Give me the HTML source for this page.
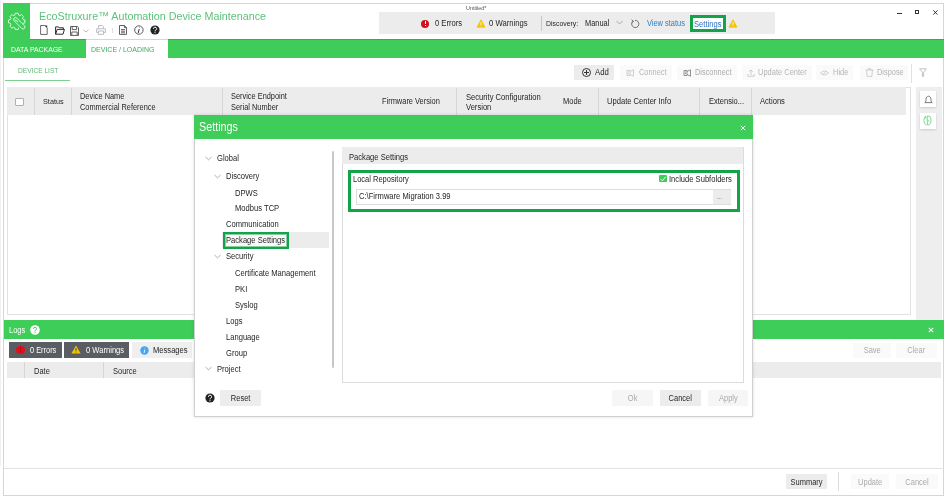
<!DOCTYPE html>
<html><head><meta charset="utf-8">
<style>
*{margin:0;padding:0;box-sizing:border-box}
html,body{width:946px;height:504px;overflow:hidden;background:#fff}
body{position:relative;font-family:"Liberation Sans",sans-serif;color:#262626;font-size:7.5px}
.a{position:absolute}
.t{position:absolute;white-space:nowrap;line-height:10px;height:10px;will-change:transform;transform:scaleY(1.1);transform-origin:0 60%}
.g{background:#3dcd58}
.bd{border:1px solid #d9d9d9}
</style></head><body>
<!-- window frame -->
<div class="a" style="left:0;top:0;width:1px;height:466px;background:#f0f0f0"></div>
<div class="a" style="left:3px;top:3px;width:941px;height:493px;border:1px solid #d6d6d6;background:#fff"></div>

<!-- title bar -->
<div class="a g" style="left:3px;top:3px;width:27px;height:36px"></div>
<svg class="a" style="left:6px;top:10px" width="22" height="22" viewBox="0 0 22 22">
<path d="M12.74 17.68 L12.63 17.71 L12.14 19.57 L9.26 19.57 L8.77 17.71 L7.60 17.23 L5.94 18.20 L3.90 16.16 L4.87 14.50 L4.39 13.33 L2.53 12.84 L2.53 9.96 L4.39 9.47 L4.87 8.30 L3.90 6.64 L5.94 4.60 L7.60 5.57 L8.77 5.09 L9.26 3.23 L12.14 3.23 L12.63 5.09 L13.80 5.57 L15.46 4.60 L17.50 6.64 L16.53 8.30 L17.01 9.47 L18.87 9.96 L18.87 12.84 L17.01 13.33 L16.90 13.66" stroke="#e8ffe8" stroke-width="0.9" fill="none" stroke-linejoin="round"/>
<path d="M7.96 10.64 L15.86 18.54 A1.9 1.9 0 0 0 18.54 15.86 L10.64 7.96 A1.9 1.9 0 0 0 7.96 10.64 Z M8.6 9.6 L12.2 11.9" stroke="#e8ffe8" stroke-width="0.9" fill="none" stroke-linejoin="round"/>
</svg>
<!-- toolbar icons -->
<svg class="a" style="left:40px;top:25px" width="8" height="10" viewBox="0 0 8 10"><path d="M0.6 0.5 L4.8 0.5 L7.2 2.8 L7.2 9.4 L0.6 9.4 Z" stroke="#444" stroke-width="0.8" fill="none" stroke-linejoin="round"/><path d="M4.6 0.5 L7.2 0.5 L7.2 2.8 Z" fill="#333"/></svg>
<svg class="a" style="left:54.5px;top:25.5px" width="10" height="9" viewBox="0 0 10 9"><path d="M0.6 0.9 L3.6 0.9 L4.4 1.8 L8.4 1.8 L8.4 3.4 M0.6 0.9 L0.6 8.2 L8 8.2 L9.4 3.4 L2.2 3.4 L0.6 8.2" stroke="#222" stroke-width="0.95" fill="none" stroke-linejoin="round"/></svg>
<svg class="a" style="left:70px;top:26px" width="9" height="10" viewBox="0 0 9 10"><path d="M0.5 0.5 L7.4 0.5 L8.5 1.6 L8.5 9.4 L0.5 9.4 Z M2.2 0.5 L2.2 3.6 L6.6 3.6 L6.6 0.5 M1.8 9.4 L1.8 6 L7.2 6 L7.2 9.4" stroke="#444" stroke-width="0.85" fill="none" stroke-linejoin="round"/></svg>
<svg class="a" style="left:83px;top:28.5px" width="6" height="4" viewBox="0 0 6 4"><path d="M0.5 0.8 L3 3 L5.5 0.8" stroke="#999" stroke-width="0.7" fill="none"/></svg>
<svg class="a" style="left:96px;top:25px" width="10" height="10" viewBox="0 0 10 10"><path d="M2.6 3.6 L2.6 0.6 L6.4 0.6 L7.4 1.6 L7.4 3.6 M0.6 3.8 L9.4 3.8 L9.4 7.4 L7.6 7.4 M2.4 7.4 L0.6 7.4 L0.6 3.8 M2.4 6 L7.6 6 L7.6 9.4 L2.4 9.4 Z" stroke="#aaa" stroke-width="0.75" fill="none" stroke-linejoin="round"/></svg>
<div class="a" style="left:111.5px;top:28px;width:1px;height:5px;background:#ddd"></div>
<svg class="a" style="left:119px;top:25px" width="8" height="10" viewBox="0 0 8 10"><path d="M0.5 0.5 L5.4 0.5 L7.5 2.6 L7.5 9.4 L0.5 9.4 Z M5.4 0.5 L5.4 2.6 L7.5 2.6 M2 4.6 L6 4.6 M2 6.2 L6 6.2 M2 7.8 L6 7.8" stroke="#444" stroke-width="0.85" fill="none" stroke-linejoin="round"/></svg>
<svg class="a" style="left:134px;top:24.5px" width="10" height="10" viewBox="0 0 10 10"><circle cx="4.9" cy="5" r="4.2" stroke="#333" stroke-width="0.8" fill="none"/><path d="M5.6 2.2 L5.6 2.6 M5.2 4 L4.2 8" stroke="#333" stroke-width="1"/></svg>
<svg class="a" style="left:150px;top:24.5px" width="10" height="10" viewBox="0 0 10 10"><circle cx="5" cy="5" r="4.6" fill="#222"/><path d="M3.4 3.8 A1.6 1.6 0 1 1 5.4 5.3 L5 5.8 L5 6.4" stroke="#fff" stroke-width="1" fill="none"/><rect x="4.5" y="7.2" width="1" height="1" fill="#fff"/></svg>
<div class="t" style="left:38.8px;top:9.5px;font-size:10.75px;line-height:12px;height:12px;color:#5dc27b">EcoStruxure™ Automation Device Maintenance</div>

<!-- status box -->
<div class="a" style="left:379px;top:12px;width:396px;height:21.5px;background:#ececec"></div>
<div class="t" style="left:466px;top:3.4px;font-size:5.4px;color:#555">Untitled*</div>
<div class="a" style="left:421px;top:19.5px;width:8px;height:8px;border-radius:50%;background:#d0111b"></div>
<div class="a" style="left:424.6px;top:21px;width:0.9px;height:3.2px;background:#fff"></div>
<div class="a" style="left:424.6px;top:25px;width:0.9px;height:0.9px;background:#fff"></div>
<div class="t" style="left:435px;top:19.4px;font-size:7.6px">0 Errors</div>
<svg class="a" style="left:475.5px;top:19px" width="10" height="9" viewBox="0 0 10 9"><path d="M5 0.8 L9 8.2 L1 8.2 Z" stroke="#f2c500" stroke-width="0.8" stroke-linejoin="round" fill="#f2c500"/><rect x="4.6" y="3" width="0.8" height="3" fill="#fff"/><rect x="4.6" y="6.6" width="0.8" height="0.8" fill="#fff"/></svg>
<div class="t" style="left:489px;top:19.4px;font-size:7.7px">0 Warnings</div>
<div class="a" style="left:541px;top:16px;width:1px;height:15px;background:#c8c8c8"></div>
<div class="t" style="left:546px;top:19.4px;font-size:6.9px">Discovery:</div>
<div class="t" style="left:585px;top:19.4px;font-size:7.4px">Manual</div>
<svg class="a" style="left:616px;top:20px" width="7" height="5" viewBox="0 0 7 5"><path d="M0.5 1 L3.5 4 L6.5 1" stroke="#999" stroke-width="0.8" fill="none"/></svg>
<svg class="a" style="left:629.5px;top:18.5px" width="10" height="10" viewBox="0 0 10 10"><path d="M3 2.2 A3.6 3.6 0 1 0 5 1.4" stroke="#666" stroke-width="0.9" fill="none"/><path d="M1.6 0.8 L3.6 2.4 L1.6 3.8" stroke="#666" stroke-width="0.9" fill="none"/></svg>
<div class="t" style="left:647px;top:19.4px;font-size:7.45px;color:#2a7fc9">View status</div>
<div class="a" style="left:690px;top:15px;width:36px;height:17.4px;border:3px solid #13a44a;background:#fff"></div>
<div class="t" style="left:694.4px;top:20px;font-size:7.6px;color:#2f72c0">Settings</div>
<svg class="a" style="left:727.5px;top:18.6px" width="10" height="9" viewBox="0 0 10 9"><path d="M5 0.8 L9 8.2 L1 8.2 Z" stroke="#f2c500" stroke-width="0.8" stroke-linejoin="round" fill="#f2c500"/><rect x="4.6" y="3" width="0.8" height="3" fill="#fff"/><rect x="4.6" y="6.6" width="0.8" height="0.8" fill="#fff"/></svg>

<!-- window controls -->
<div class="a" style="left:897px;top:13px;width:5px;height:1px;background:#333"></div>
<div class="a" style="left:915px;top:10px;width:4px;height:4px;border:1px solid #333"></div>
<svg class="a" style="left:932.5px;top:10px" width="5" height="5" viewBox="0 0 5 5"><path d="M0.4 0.4 L4.4 4.6 M4.4 0.4 L0.4 4.6" stroke="#333" stroke-width="1"/></svg>

<!-- tab bar -->
<div class="a g" style="left:3px;top:39.4px;width:941px;height:19px"></div>
<div class="a" style="left:86px;top:39.4px;width:82px;height:19px;background:#fff"></div>
<div class="a" style="left:30px;top:38.8px;width:914px;height:1px;background:rgba(0,0,0,.16)"></div>
<div class="t" style="left:10.6px;top:44.6px;font-size:6.9px;color:#fff">DATA PACKAGE</div>
<div class="t" style="left:90.7px;top:44.6px;font-size:7px;color:#3dab5a">DEVICE / LOADING</div>

<!-- device list tab -->
<div class="t" style="left:17.8px;top:66px;font-size:6.6px;color:#5cb874">DEVICE LIST</div>
<div class="a" style="left:4.6px;top:79.5px;width:65.4px;height:1.5px;background:#7fd08f"></div>

<!-- table -->
<div class="a" style="left:6.5px;top:87.4px;width:904px;height:227.2px;border:1px solid #e2e2e2"></div>
<div class="a" style="left:6.5px;top:87.4px;width:899.5px;height:27.6px;background:#ececec"></div>

<!-- header separators -->
<div class="a" style="left:34px;top:88px;width:1px;height:27px;background:#d6d6d6"></div>
<div class="a" style="left:71px;top:88px;width:1px;height:27px;background:#d6d6d6"></div>
<div class="a" style="left:222px;top:88px;width:1px;height:27px;background:#d6d6d6"></div>
<div class="a" style="left:456px;top:88px;width:1px;height:27px;background:#d6d6d6"></div>
<div class="a" style="left:598px;top:88px;width:1px;height:27px;background:#d6d6d6"></div>
<div class="a" style="left:699px;top:88px;width:1px;height:27px;background:#d6d6d6"></div>
<div class="a" style="left:751px;top:88px;width:1px;height:27px;background:#d6d6d6"></div>
<div class="a" style="left:15.4px;top:97.5px;width:8.3px;height:8.3px;border:1px solid #b0b0b0;background:#fff;border-radius:1px"></div>
<div class="t" style="left:43px;top:97.4px;font-size:7.3px">Status</div>
<div class="t" style="left:80px;top:92.3px;font-size:7.4px">Device Name</div>
<div class="t" style="left:80px;top:103.1px;font-size:7.4px">Commercial Reference</div>
<div class="t" style="left:230.6px;top:92.3px;font-size:7.4px">Service Endpoint</div>
<div class="t" style="left:230.6px;top:103.1px;font-size:7.4px">Serial Number</div>
<div class="t" style="left:382px;top:97.4px;font-size:7.45px">Firmware Version</div>
<div class="t" style="left:466px;top:92.7px;font-size:7.6px">Security Configuration</div>
<div class="t" style="left:466px;top:103.2px;font-size:7.6px">Version</div>
<div class="t" style="left:563px;top:97.4px;font-size:7.5px">Mode</div>
<div class="t" style="left:607px;top:97.4px;font-size:7.6px">Update Center Info</div>
<div class="t" style="left:708.6px;top:97.4px;font-size:7.5px">Extensio...</div>
<div class="t" style="left:759.7px;top:97.4px;font-size:7.6px">Actions</div>

<!-- toolbar -->
<div class="a" style="left:574.4px;top:64.5px;width:40px;height:15.5px;background:#ececec"></div>
<div class="a" style="left:581.5px;top:68px;width:9px;height:9px;border:1px solid #333;border-radius:50%"></div>
<div class="a" style="left:583.5px;top:72px;width:5px;height:1px;background:#333"></div>
<div class="a" style="left:585.5px;top:70px;width:1px;height:5px;background:#333"></div>
<div class="t" style="left:595px;top:67.8px;font-size:7.8px">Add</div>
<div class="a" style="left:620px;top:64.5px;width:52px;height:15.5px;background:#fafafa"></div>
<div class="a" style="left:677px;top:64.5px;width:60px;height:15.5px;background:#fafafa"></div>
<div class="a" style="left:742px;top:64.5px;width:70px;height:15.5px;background:#fafafa"></div>
<div class="a" style="left:816px;top:64.5px;width:37px;height:15.5px;background:#fafafa"></div>
<div class="a" style="left:860px;top:64.5px;width:48px;height:15.5px;background:#fafafa"></div>
<div class="t" style="left:639px;top:67.8px;font-size:7.4px;color:#b5b5b5">Connect</div>
<div class="t" style="left:695px;top:67.8px;font-size:7.4px;color:#ababab">Disconnect</div>
<div class="t" style="left:758.4px;top:67.8px;font-size:7.5px;color:#b5b5b5">Update Center</div>
<div class="t" style="left:832.6px;top:67.8px;font-size:7.5px;color:#b5b5b5">Hide</div>
<div class="t" style="left:877px;top:67.8px;font-size:7.4px;color:#b5b5b5">Dispose</div>
<div class="a" style="left:910.5px;top:64px;width:1px;height:19px;background:#e0e0e0"></div>
<svg class="a" style="left:625.5px;top:68.5px" width="9" height="8" viewBox="0 0 9 8"><path d="M1 1.5 L4 1.5 L4 6.5 L1 6.5 Z M4 2.5 L7.5 0.8 L7.5 7.2 L4 5.5 M2 3 L3 3 M2 4.5 L3 4.5" stroke="#bbb" stroke-width="0.7" fill="none"/></svg>
<svg class="a" style="left:682.5px;top:68.5px" width="9" height="8" viewBox="0 0 9 8"><path d="M1 1.5 L4 1.5 L4 6.5 L1 6.5 Z M4 2.5 L7.5 0.8 L7.5 7.2 L4 5.5 M2 3 L3 3 M2 4.5 L3 4.5" stroke="#777" stroke-width="0.8" fill="none"/></svg>
<svg class="a" style="left:746.5px;top:68.5px" width="8" height="8" viewBox="0 0 8 8"><path d="M4 6 L4 1 M2.2 2.8 L4 1 L5.8 2.8 M0.8 5 L0.8 7.2 L7.2 7.2 L7.2 5" stroke="#bbb" stroke-width="0.7" fill="none"/></svg>
<svg class="a" style="left:819.5px;top:69.5px" width="9" height="6" viewBox="0 0 9 6"><path d="M0.6 3 Q4.5 -1 8.4 3 Q4.5 7 0.6 3 Z M3 5 L6 1" stroke="#bbb" stroke-width="0.7" fill="none"/></svg>
<svg class="a" style="left:864.5px;top:68px" width="9" height="9" viewBox="0 0 9 9"><path d="M0.8 2 L8.2 2 M3 2 L3.3 0.8 L5.7 0.8 L6 2 M1.6 2 L2.2 8.4 L6.8 8.4 L7.4 2" stroke="#bbb" stroke-width="0.7" fill="none"/></svg>
<svg class="a" style="left:918.5px;top:67.8px" width="8" height="9" viewBox="0 0 8 9"><path d="M0.6 0.8 L7.4 0.8 L4.6 4.2 L4.6 8.4 L3.4 8.4 L3.4 4.2 Z" stroke="#aaa" stroke-width="0.7" fill="none" stroke-linejoin="round"/></svg>

<!-- right sidebar -->
<div class="a" style="left:915.6px;top:86.5px;width:26.5px;height:234px;background:#eeeeee"></div>
<div class="a" style="left:919.8px;top:91px;width:16.4px;height:16px;background:#fff;box-shadow:0 1px 2px rgba(0,0,0,.15)"></div>
<div class="a" style="left:919.8px;top:113px;width:16.4px;height:16px;background:#fff;box-shadow:0 1px 2px rgba(0,0,0,.15)"></div>
<svg class="a" style="left:923.5px;top:94.5px" width="9" height="9" viewBox="0 0 9 9"><path d="M0.8 7.6 L8.2 7.6 C7.2 7 7 6 7 4.6 C7 2.6 6 1.2 4.5 1.2 C3 1.2 2 2.6 2 4.6 C2 6 1.8 7 0.8 7.6 Z" stroke="#444" stroke-width="0.7" fill="none" stroke-linejoin="round"/></svg>
<svg class="a" style="left:922.5px;top:115px" width="9" height="11" viewBox="0 0 9 11"><path d="M3 1.2 C1.4 2 1 3.6 1 5.5 C1 7.6 1.6 9.4 3.6 9.9 M4.2 1 L7 1.4 C7.8 2.6 8 4 8 5.5 C8 7.4 7.4 9.2 5.8 9.8 L4.4 9.8 Z M1.6 2 L3.6 3.4 M4.8 5.6 L6.6 6.2" stroke="#5fcf78" stroke-width="0.8" fill="none" stroke-linejoin="round"/></svg>

<!-- logs -->
<div class="a g" style="left:3.6px;top:320.3px;width:940px;height:19px"></div>
<div class="t" style="left:9px;top:325.7px;font-size:7.5px;color:#fff">Logs</div>
<svg class="a" style="left:29.8px;top:325.2px" width="10" height="10" viewBox="0 0 10 10"><circle cx="5" cy="5" r="4.8" fill="#fff"/><path d="M3.5 3.9 A1.5 1.5 0 1 1 5.4 5.3 L5 5.8 L5 6.4" stroke="#3dcd58" stroke-width="1" fill="none"/><rect x="4.5" y="7.1" width="1" height="1" fill="#3dcd58"/></svg>
<svg class="a" style="left:927.5px;top:326.5px" width="6" height="6" viewBox="0 0 6 6"><path d="M0.8 0.8 L5.2 5.2 M5.2 0.8 L0.8 5.2" stroke="#fff" stroke-width="1.1"/></svg>
<div class="a" style="left:9px;top:342.2px;width:52.6px;height:15.7px;background:#5a5e62"></div>
<div class="a" style="left:16px;top:345.5px;width:8.6px;height:8.6px;border-radius:50%;background:#e0101b"></div>
<div class="a" style="left:19.9px;top:347px;width:0.9px;height:3.4px;background:#a0101a"></div>
<div class="a" style="left:19.9px;top:351.2px;width:0.9px;height:0.9px;background:#a0101a"></div>
<div class="t" style="left:30.2px;top:345.7px;font-size:7.4px;color:#fff">0 Errors</div>
<div class="a" style="left:64.2px;top:342.2px;width:64.6px;height:15.7px;background:#5a5e62"></div>
<svg class="a" style="left:71px;top:345.3px" width="10" height="9" viewBox="0 0 10 9"><path d="M5 0.5 L9.6 8.5 L0.4 8.5 Z" fill="#f2c500"/><rect x="4.6" y="3" width="0.8" height="3" fill="#333"/><rect x="4.6" y="6.6" width="0.8" height="0.8" fill="#333"/></svg>
<div class="t" style="left:85.5px;top:345.7px;font-size:7.6px;color:#fff">0 Warnings</div>
<div class="a" style="left:131.5px;top:342.2px;width:60px;height:15.7px;background:#efefef"></div>
<svg class="a" style="left:139.5px;top:345.6px" width="9" height="9" viewBox="0 0 9 9"><circle cx="4.5" cy="4.5" r="4.2" fill="#42a5f5"/><path d="M4.9 2.1 L4.9 2.5 M4.7 3.7 L4.1 6.9" stroke="#fff" stroke-width="0.9"/></svg>
<div class="t" style="left:153px;top:345.7px;font-size:7.6px">Messages</div>
<div class="a" style="left:853px;top:342.5px;width:38.4px;height:15.4px;background:#fafafa"></div>
<div class="t" style="left:853px;top:345.7px;width:38.4px;text-align:center;font-size:7.5px;color:#aaa">Save</div>
<div class="a" style="left:896px;top:342.5px;width:40.5px;height:15.4px;background:#fafafa"></div>
<div class="t" style="left:896px;top:345.7px;width:40.5px;text-align:center;font-size:7.5px;color:#aaa">Clear</div>
<div class="a" style="left:6.5px;top:362.3px;width:934.5px;height:16px;background:#ececec"></div>
<div class="a" style="left:24.4px;top:362.3px;width:1px;height:16px;background:#d6d6d6"></div>
<div class="a" style="left:103px;top:362.3px;width:1px;height:16px;background:#d6d6d6"></div>
<div class="t" style="left:33.8px;top:366.7px;font-size:7.5px">Date</div>
<div class="t" style="left:112.7px;top:366.7px;font-size:7.5px">Source</div>
<!-- footer -->
<div class="a" style="left:786.4px;top:474.2px;width:41.1px;height:15px;background:#ececec"></div>
<div class="t" style="left:786.4px;top:477.8px;width:41.1px;text-align:center;font-size:7.5px">Summary</div>
<div class="a" style="left:838.3px;top:472.2px;width:1px;height:19px;background:#dcdcdc"></div>
<div class="a" style="left:850.6px;top:474.2px;width:38.4px;height:15px;background:#fafafa"></div>
<div class="t" style="left:850.6px;top:477.8px;width:38.4px;text-align:center;font-size:7.5px;color:#aaa">Update</div>
<div class="a" style="left:896px;top:474.2px;width:42px;height:15px;background:#fafafa"></div>
<div class="t" style="left:896px;top:477.8px;width:42px;text-align:center;font-size:7.5px;color:#aaa">Cancel</div>
<div class="a" style="left:3.6px;top:467.7px;width:940px;height:1px;background:#e2e2e2"></div>

<!-- dialog -->
<div class="a" style="left:193.5px;top:114.8px;width:559.5px;height:302.2px;background:#fff;border:1px solid #d0d0d0;box-shadow:0 0 3px rgba(0,0,0,.15)"></div>
<div class="a g" style="left:193.5px;top:114.8px;width:559.5px;height:24px"></div>
<div class="t" style="left:198.6px;top:121.5px;font-size:10.8px;line-height:11px;height:11px;color:#fff">Settings</div>
<svg class="a" style="left:740px;top:124.5px" width="6" height="6" viewBox="0 0 6 6"><path d="M0.8 0.8 L5.2 5.2 M5.2 0.8 L0.8 5.2" stroke="#fff" stroke-width="1"/></svg>
<!-- tree -->
<svg class="a" style="left:204.5px;top:156px" width="7" height="5" viewBox="0 0 7 5"><path d="M0.5 1 L3.5 3.8 L6.5 1" stroke="#8c8c8c" stroke-width="0.7" fill="none"/></svg>
<div class="t" style="left:216.7px;top:154.1px;font-size:7.6px">Global</div>
<svg class="a" style="left:213.5px;top:173.5px" width="7" height="5" viewBox="0 0 7 5"><path d="M0.5 1 L3.5 3.8 L6.5 1" stroke="#8c8c8c" stroke-width="0.7" fill="none"/></svg>
<div class="t" style="left:225.7px;top:171.8px;font-size:7.6px">Discovery</div>
<div class="t" style="left:234.8px;top:188.6px;font-size:7.6px">DPWS</div>
<div class="t" style="left:234.8px;top:204.4px;font-size:7.6px">Modbus TCP</div>
<div class="t" style="left:225.7px;top:220.3px;font-size:7.6px">Communication</div>
<div class="a" style="left:222px;top:232px;width:107px;height:15.7px;background:#ececec"></div>
<div class="a" style="left:222.5px;top:232px;width:66.5px;height:16.7px;border:2px solid #13a44a;box-shadow:inset 0 0 0 1px rgba(19,164,74,.5);background:#fafafa"></div>
<div class="t" style="left:225.7px;top:236.3px;font-size:7.6px">Package Settings</div>
<svg class="a" style="left:213.5px;top:253.5px" width="7" height="5" viewBox="0 0 7 5"><path d="M0.5 1 L3.5 3.8 L6.5 1" stroke="#8c8c8c" stroke-width="0.7" fill="none"/></svg>
<div class="t" style="left:225.7px;top:251.8px;font-size:7.6px">Security</div>
<div class="t" style="left:234.8px;top:269.1px;font-size:7.6px">Certificate Management</div>
<div class="t" style="left:234.8px;top:285.3px;font-size:7.6px">PKI</div>
<div class="t" style="left:234.8px;top:301.1px;font-size:7.6px">Syslog</div>
<div class="t" style="left:225.7px;top:317.0px;font-size:7.6px">Logs</div>
<div class="t" style="left:225.7px;top:333.2px;font-size:7.6px">Language</div>
<div class="t" style="left:225.7px;top:349.1px;font-size:7.6px">Group</div>
<svg class="a" style="left:204.5px;top:366px" width="7" height="5" viewBox="0 0 7 5"><path d="M0.5 1 L3.5 3.8 L6.5 1" stroke="#8c8c8c" stroke-width="0.7" fill="none"/></svg>
<div class="t" style="left:216.7px;top:364.6px;font-size:7.6px">Project</div>
<div class="a" style="left:331.6px;top:150.7px;width:2.2px;height:217.5px;background:#c8c8c8;border-radius:1px"></div>
<!-- right panel -->
<div class="a" style="left:342.4px;top:147.4px;width:401.6px;height:236px;border:1px solid #dcdcdc;background:#fff"></div>
<div class="a" style="left:342.4px;top:147.4px;width:401px;height:16.6px;background:#ececec"></div>
<div class="t" style="left:348.7px;top:152.9px;font-size:7.6px">Package Settings</div>
<div class="a" style="left:348px;top:170px;width:392px;height:42px;border:3px solid #13a44a"></div>
<div class="t" style="left:352.8px;top:174.7px;font-size:7.5px">Local Repository</div>
<div class="a" style="left:659px;top:174.8px;width:8px;height:7.5px;background:#3dcd58;border-radius:1px"></div>
<svg class="a" style="left:659px;top:174.8px" width="8" height="8" viewBox="0 0 8 8"><path d="M1.6 4 L3.4 5.8 L6.6 1.8" stroke="#fff" stroke-width="0.9" fill="none"/></svg>
<div class="t" style="left:669.3px;top:174.5px;font-size:7.6px">Include Subfolders</div>
<div class="a" style="left:356px;top:189.2px;width:375px;height:15.8px;border:1px solid #dedede;background:#fff"></div>
<div class="a" style="left:712.5px;top:190.2px;width:18px;height:13.8px;background:#ececec"></div>
<div class="t" style="left:717px;top:191.5px;font-size:6px;color:#666">...</div>
<div class="t" style="left:359px;top:192.1px;font-size:7.6px">C:\Firmware Migration 3.99</div>
<!-- dialog footer -->
<svg class="a" style="left:204.6px;top:393px" width="10" height="10" viewBox="0 0 10 10"><circle cx="5" cy="5" r="4.6" fill="#222"/><path d="M3.4 3.8 A1.6 1.6 0 1 1 5.4 5.3 L5 5.8 L5 6.4" stroke="#fff" stroke-width="1" fill="none"/><rect x="4.5" y="7.2" width="1" height="1" fill="#fff"/></svg>
<div class="a" style="left:219.8px;top:390.4px;width:41.2px;height:15.6px;background:#ededed;border-radius:1px"></div>
<div class="t" style="left:219.8px;top:393.5px;width:41.2px;text-align:center;font-size:7.5px">Reset</div>
<div class="a" style="left:611.7px;top:390.4px;width:41.3px;height:15.8px;background:#f6f6f6"></div>
<div class="t" style="left:611.7px;top:394px;width:41.3px;text-align:center;font-size:7.5px;color:#aaa">Ok</div>
<div class="a" style="left:660px;top:390.4px;width:40.6px;height:15.8px;background:#ececec"></div>
<div class="t" style="left:660px;top:394px;width:40.6px;text-align:center;font-size:7.5px">Cancel</div>
<div class="a" style="left:707.6px;top:390.4px;width:40.7px;height:15.8px;background:#f6f6f6"></div>
<div class="t" style="left:707.6px;top:394px;width:40.7px;text-align:center;font-size:7.5px;color:#aaa">Apply</div>

</body></html>
